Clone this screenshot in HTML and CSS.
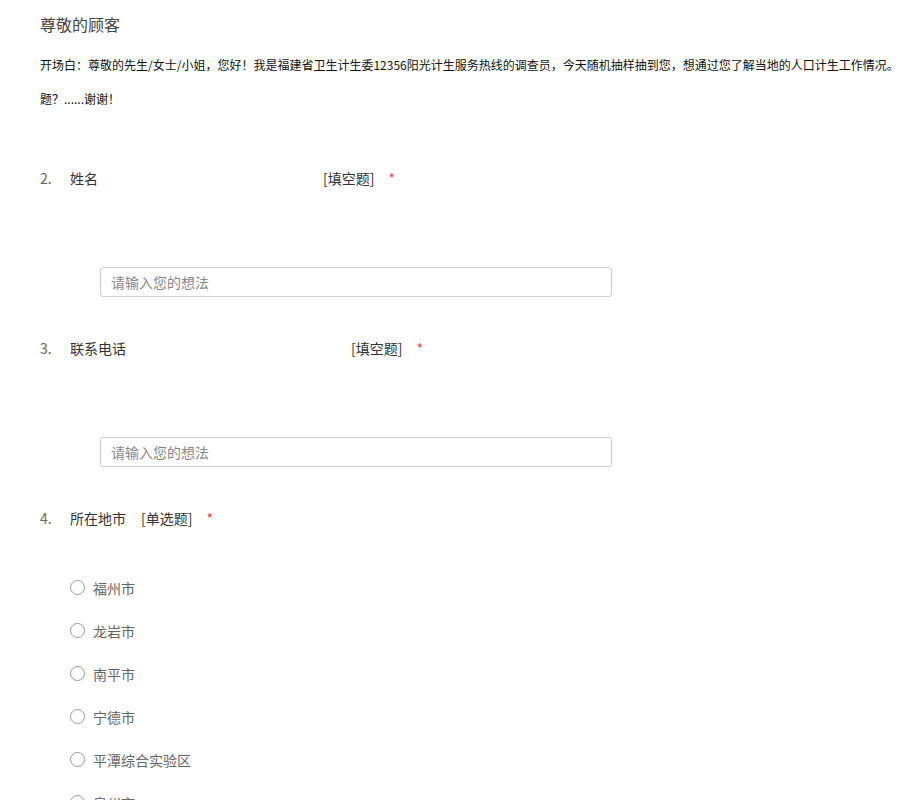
FILE: index.html
```html
<!DOCTYPE html>
<html lang="zh-CN">
<head>
    <meta charset="UTF-8">
    <meta name="viewport" content="width=device-width, initial-scale=1.0">
    <title>问卷调查</title>
    <link rel="stylesheet" href="styles.css">
</head>
<body>

<div class="page">
    <h1 class="title">尊敬的顾客</h1>
    <p class="intro">开场白：尊敬的先生/女士/小姐，您好！我是福建省卫生计生委12356阳光计生服务热线的调查员，今天随机抽样抽到您，想通过您了解当地的人口计生工作情况。<br>题？......谢谢！</p>

    <div class="question">
        <div class="q-head">
            <span class="q-num">2.</span>
            <span class="q-label fill">姓名</span>
            <span class="q-type">[填空题]</span>
            <span class="q-req">*</span>
        </div>
        <input class="q-input" type="text" placeholder="请输入您的想法">
    </div>

    <div class="question">
        <div class="q-head">
            <span class="q-num">3.</span>
            <span class="q-label fill">联系电话</span>
            <span class="q-type">[填空题]</span>
            <span class="q-req">*</span>
        </div>
        <input class="q-input" type="text" placeholder="请输入您的想法">
    </div>

    <div class="question">
        <div class="q-head">
            <span class="q-num">4.</span>
            <span class="q-label">所在地市</span>
            <span class="q-type">[单选题]</span>
            <span class="q-req">*</span>
        </div>
        <ul class="options">
            <li><span class="radio"></span>福州市</li>
            <li><span class="radio"></span>龙岩市</li>
            <li><span class="radio"></span>南平市</li>
            <li><span class="radio"></span>宁德市</li>
            <li><span class="radio"></span>平潭综合实验区</li>
            <li><span class="radio"></span>泉州市</li>
        </ul>
    </div>
</div>

</body>
</html>
```

FILE: styles.css
```css
/* Mise en page générale */
body {
    margin: 0;
    background-color: #ffffff;
    font-family: "Noto Sans CJK SC", "Noto Sans", sans-serif;
    color: #333;
    overflow: hidden;
}

.page {
    padding: 0 0 0 40px;
}

.title {
    font-size: 16px;
    font-weight: normal;
    line-height: 24px;
    margin: 12px 0 0;
    color: #444;
}

.intro {
    font-size: 12px;
    line-height: 34px;
    margin: 12px 0 0;
    color: #111;
    white-space: nowrap;
}

/* Questions */
.question {
    margin-top: 52px;
}

.question + .question {
    margin-top: 41px;
}

.q-head {
    display: flex;
    align-items: center;
    font-size: 14px;
    line-height: 20px;
}

.q-num {
    width: 30px;
    color: #666;
}

.q-label {
    color: #333;
}

.q-label.fill {
    margin-right: 225px;
}

.q-label + .q-type {
    margin-left: 15px;
}

.q-label.fill + .q-type {
    margin-left: 0;
}

.q-type {
    color: #333;
}

.q-req {
    color: #f44;
    margin-left: 14px;
    font-size: 14px;
}

.q-input {
    display: block;
    box-sizing: border-box;
    width: 512px;
    height: 30px;
    margin: 79px 0 0 60px;
    padding: 0 10px;
    border: 1px solid #ccc;
    border-radius: 3px;
    font-family: inherit;
    font-size: 14px;
    color: #333;
    outline: none;
}

.q-input::placeholder {
    color: #888;
}

/* Options */
.options {
    list-style: none;
    margin: 38px 0 0 30px;
    padding: 0;
}

.options li {
    display: flex;
    align-items: center;
    height: 43px;
    font-size: 14px;
    color: #666;
}

.radio {
    box-sizing: border-box;
    width: 15px;
    height: 15px;
    border: 1px solid #999;
    border-radius: 50%;
    margin-right: 8px;
}
```
